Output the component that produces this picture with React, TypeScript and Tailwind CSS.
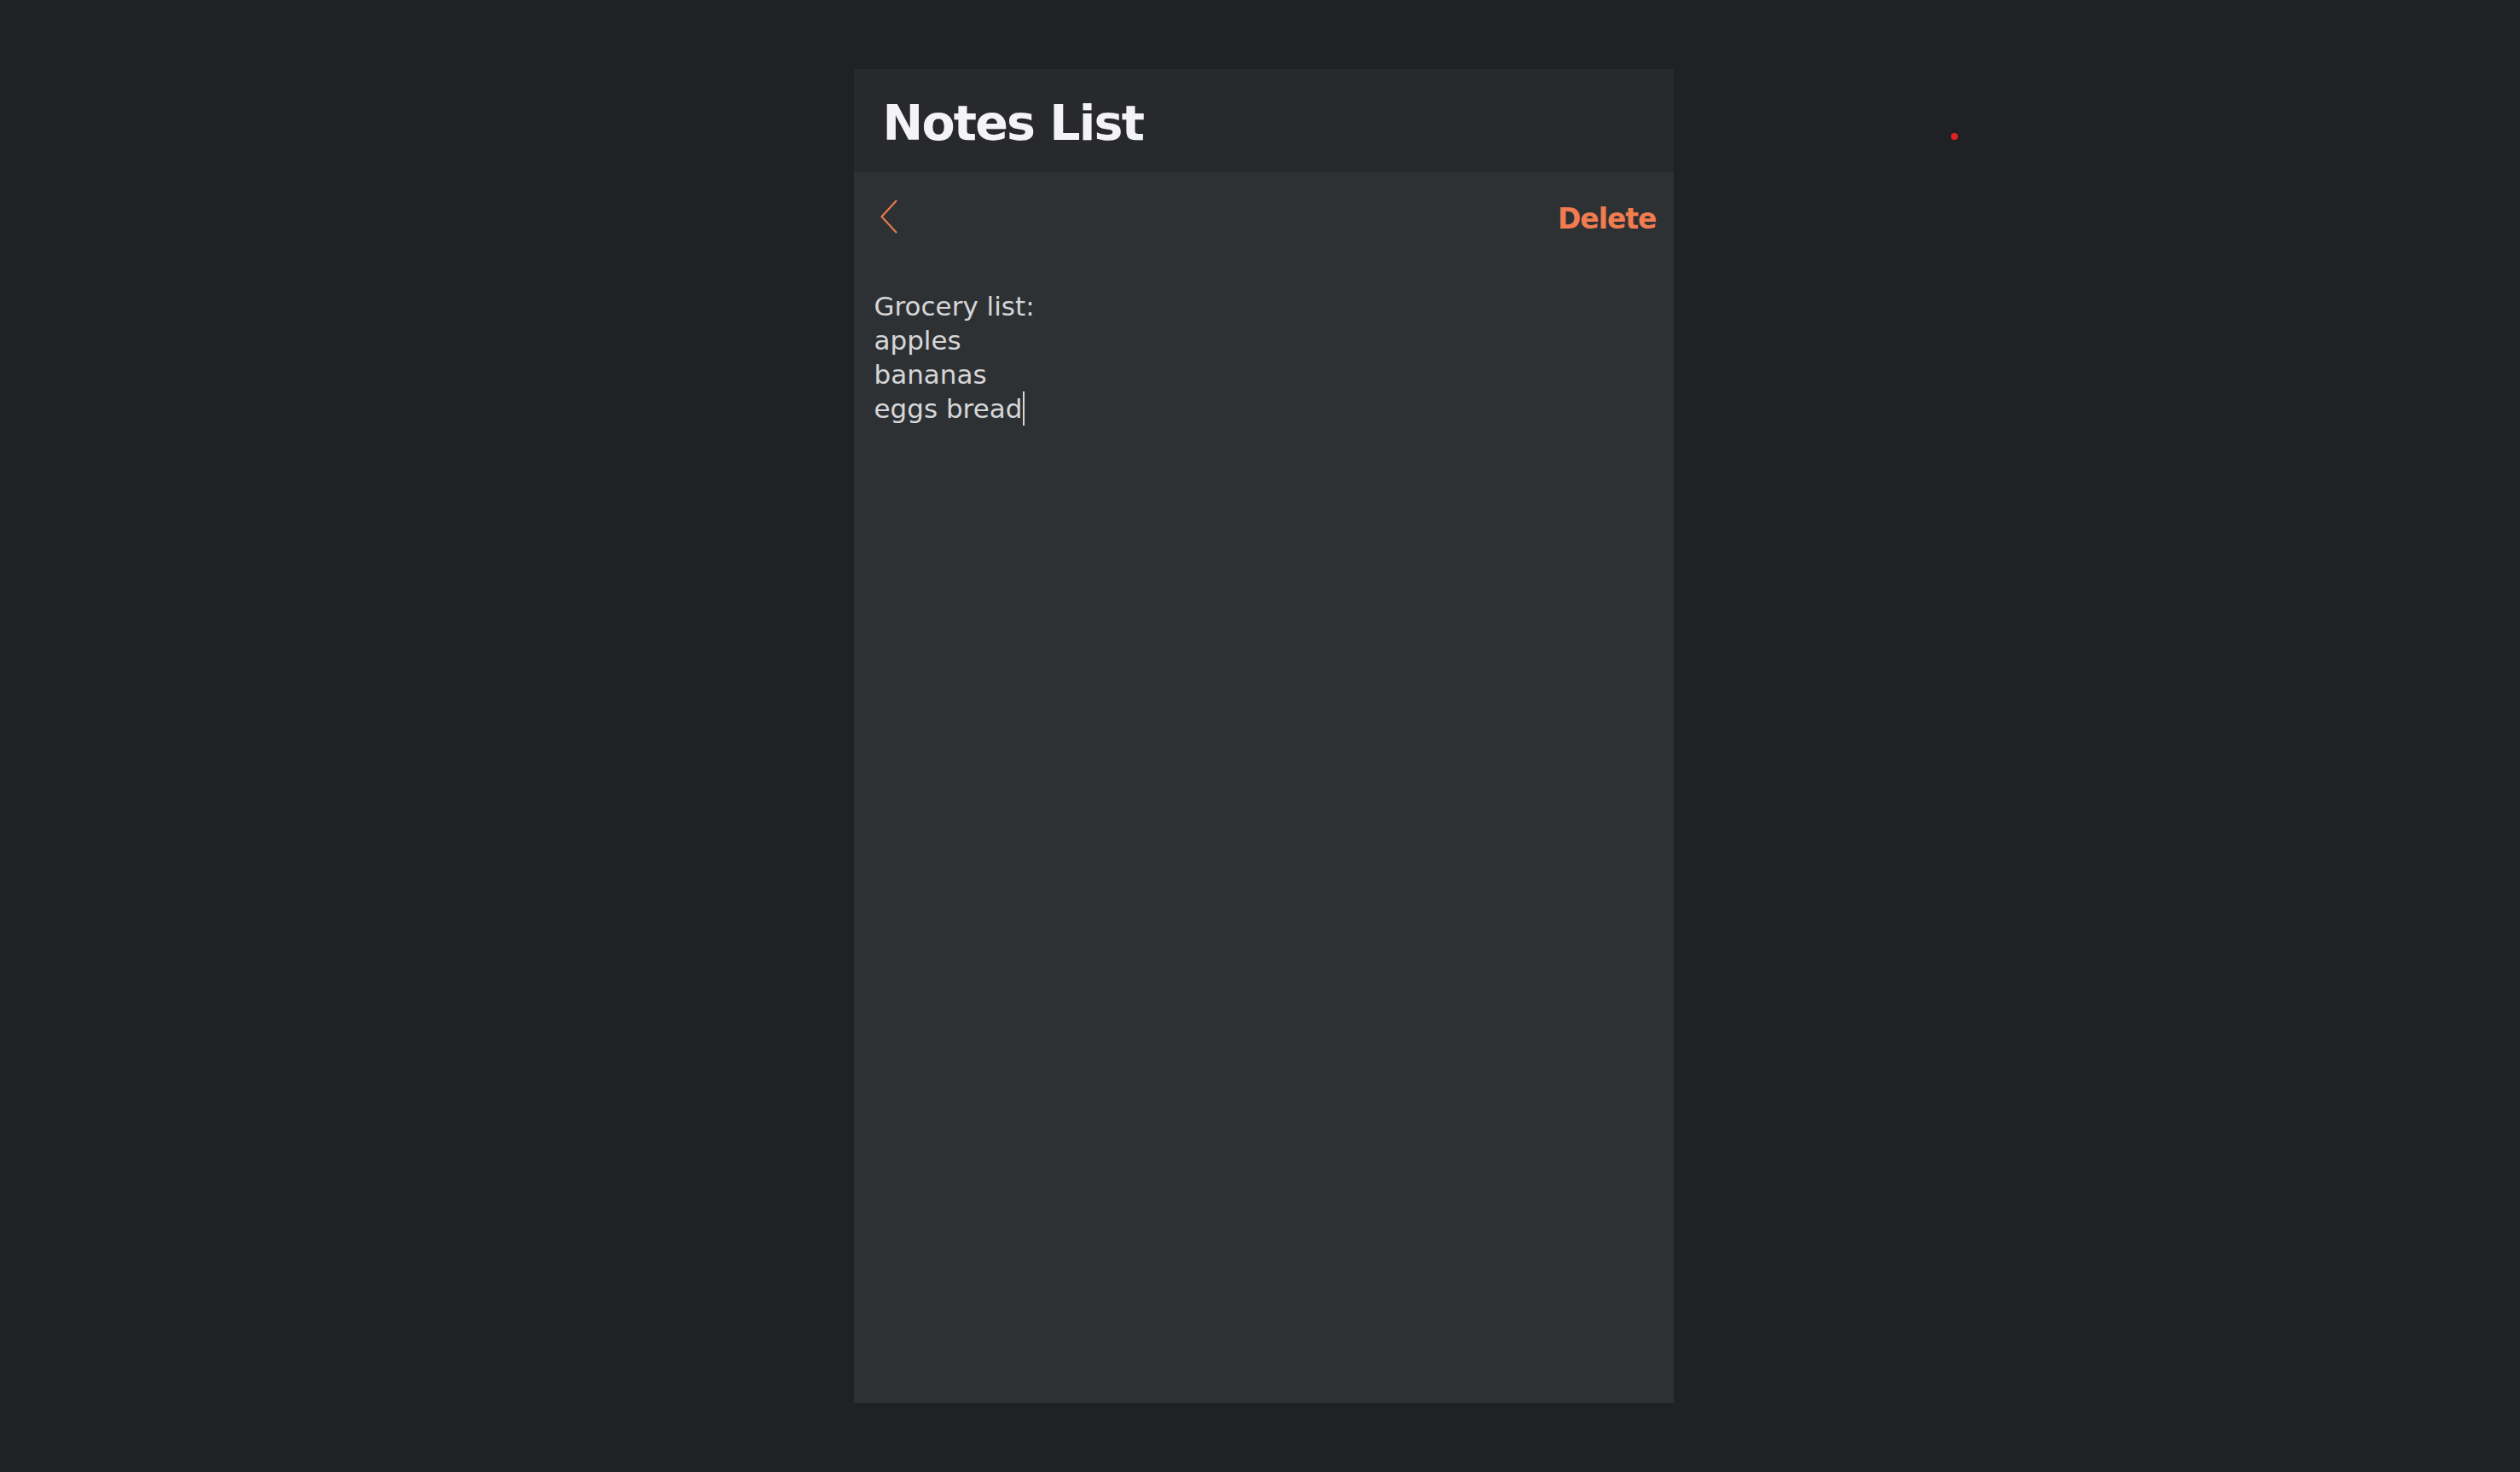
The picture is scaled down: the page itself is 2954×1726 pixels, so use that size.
import React from "react";

const font = { fontFamily: '"DejaVu Sans", "Noto Sans", sans-serif' };

const lines = ["Grocery list:", "apples", "bananas", "eggs bread"];

function BackIcon() {
  return (
    <svg width="20" height="40" viewBox="0 0 20 40" fill="none">
      <polyline points="19,1 1.5,20 19,39" stroke="#f07c4f" strokeWidth="2" strokeLinejoin="miter" />
    </svg>
  );
}

export default function App() {
  return (
    <div className="relative min-h-[1726px] w-full bg-[#202124]" style={font}>
      <div className="flex justify-center pt-[81px] pl-[8px]">
        <div className="flex h-[1564px] w-[961px] flex-col bg-[#2e3134]">
          <header className="h-[121px] shrink-0 bg-[#28292b] pl-[34px] pt-[35px]">
            <h1 className="text-[57px] font-bold leading-none tracking-[-1.8px] text-[#f4f4f6]">Notes List</h1>
          </header>
          <div className="flex items-start justify-between pl-[31px] pr-[20px] pt-[32px]">
            <button className="h-[40px] w-[20px]" aria-label="Back">
              <BackIcon />
            </button>
            <button className="pt-[6px] text-[33px] font-bold leading-none tracking-[-1px] text-[#f07c4f]">Delete</button>
          </div>
          <div className="pl-[24px] pt-[65px] text-[31px] leading-[40px] text-[#d6d6d8]">
            {lines.map((line, i) => (
              <div key={line} className="flex items-stretch">
                <span>{line}</span>
                {i === lines.length - 1 ? <span className="ml-[1px] w-[1.5px] bg-[#d6d6d8]" /> : null}
              </div>
            ))}
          </div>
        </div>
      </div>
      <span className="absolute left-[2287px] top-[156px] h-[8px] w-[8px] rounded-full bg-[#e3211f]" />
    </div>
  );
}
